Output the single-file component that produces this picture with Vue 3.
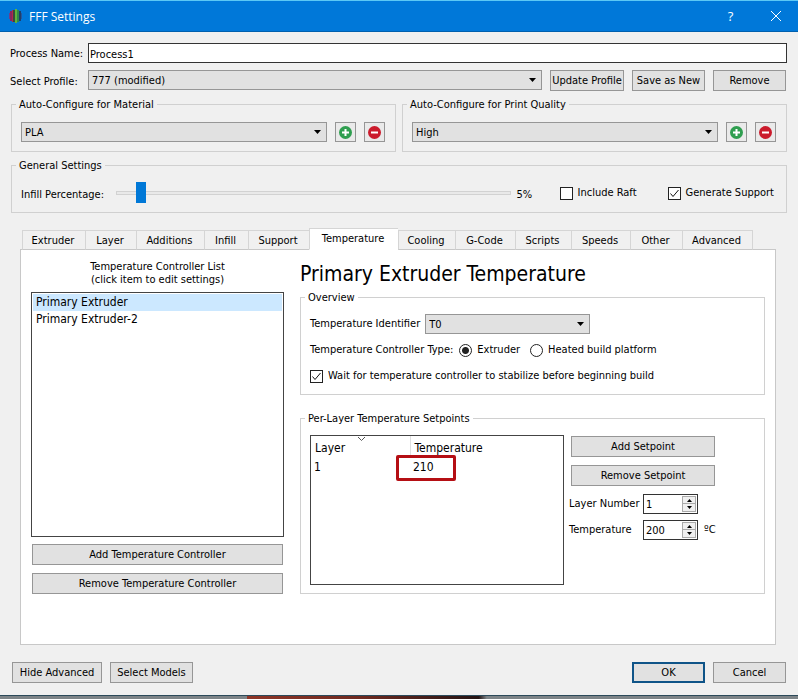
<script setup>
import { ref } from 'vue'

const processName = ref('Process1')
const profile = ref('777 (modified)')
const infill = ref(5)
const raft = ref(false)
const support = ref(true)
const presets = ref([
  { id: 'material', title: 'Auto-Configure for Material', value: 'PLA' },
  { id: 'quality', title: 'Auto-Configure for Print Quality', value: 'High' }
])
const tabs = [
  'Extruder', 'Layer', 'Additions', 'Infill', 'Support', 'Temperature',
  'Cooling', 'G-Code', 'Scripts', 'Speeds', 'Other', 'Advanced'
]
const activeTab = ref('Temperature')
const controllers = ['Primary Extruder', 'Primary Extruder-2']
const selected = ref('Primary Extruder')
const identifier = ref('T0')
const controllerType = ref('extruder')
const waitStable = ref(true)
const setpoints = ref([{ layer: 1, temperature: 210 }])
const spins = ref([
  { id: 'layer-number', label: 'Layer Number', value: 1, unit: '' },
  { id: 'set-temperature', label: 'Temperature', value: 200, unit: 'ºC' }
])
</script>

<template>
  <div class="window">
    <header class="titlebar">
      <svg class="logo" viewBox="0 0 14 14" aria-hidden="true">
        <path d="M0 4h1v6H0z" fill="#6b3f8c" />
        <path d="M1 2h2v10H1z" fill="#8a2560" />
        <path d="M3 1h1v12H3z" fill="#b02a4c" />
        <path d="M4 1h2v12H4z" fill="#3a4a3c" />
        <path d="M6 0h2v14H6z" fill="#5fb53c" />
        <path d="M8 1h2v12H8z" fill="#2f8a4a" />
        <path d="M10 2h2v10h-2z" fill="#1f3f6c" />
        <path d="M12 4h1v6h-1z" fill="#2358a0" />
      </svg>
      <h1 class="title">FFF Settings</h1>
      <button class="caption" type="button" aria-label="Help">?</button>
      <button class="caption" type="button" aria-label="Close">
        <svg class="close" viewBox="0 0 10 10" aria-hidden="true">
          <path d="M0 0L10 10M10 0L0 10" stroke="#fff" fill="none" />
        </svg>
      </button>
    </header>

    <main class="body">
      <div class="profile">
        <label for="process">Process Name:</label>
        <input id="process" v-model="processName" class="field" type="text" />
        <label for="profile">Select Profile:</label>
        <div class="profile-row">
          <span class="combo">
            <select id="profile" v-model="profile"><option>777 (modified)</option></select>
            <svg viewBox="0 0 7 4" aria-hidden="true"><path d="M0 0h7L3.500 4z" /></svg>
          </span>
          <button class="btn" type="button">Update Profile</button>
          <button class="btn" type="button">Save as New</button>
          <button class="btn" type="button">Remove</button>
        </div>
      </div>

      <div class="presets">
        <fieldset v-for="p in presets" :key="p.id" class="group">
          <legend>{{ p.title }}</legend>
          <div class="preset-row">
            <span class="combo">
              <select v-model="p.value" :aria-label="p.title"><option>{{ p.value }}</option></select>
              <svg viewBox="0 0 7 4" aria-hidden="true"><path d="M0 0h7L3.500 4z" /></svg>
            </span>
            <button class="btn icon" type="button" aria-label="Add">
              <svg viewBox="0 0 13 13" aria-hidden="true">
                <circle cx="6.500" cy="6.500" r="6.500" fill="#2f9e4f" />
                <path d="M6.500 3v7M3 6.500h7" stroke="#fff" stroke-width="2" />
              </svg>
            </button>
            <button class="btn icon" type="button" aria-label="Delete">
              <svg viewBox="0 0 13 13" aria-hidden="true">
                <circle cx="6.500" cy="6.500" r="6.500" fill="#cb1b2c" />
                <path d="M3 6.500h7" stroke="#fff" stroke-width="2" />
              </svg>
            </button>
          </div>
        </fieldset>
      </div>

      <fieldset class="group general">
        <legend>General Settings</legend>
        <div class="general-row">
          <label class="infill-label" for="infill">Infill Percentage:</label>
          <input id="infill" v-model="infill" class="slider" type="range" min="0" max="100" />
          <output class="percent" for="infill">{{ infill }}%</output>
          <label class="choice raft">
            <span class="box">
              <input v-model="raft" type="checkbox" />
              <svg viewBox="0 0 13 13" aria-hidden="true"><path d="M2.500 6.500L5 9.500L10.500 3" /></svg>
            </span>
            Include Raft
          </label>
          <label class="choice">
            <span class="box">
              <input v-model="support" type="checkbox" />
              <svg viewBox="0 0 13 13" aria-hidden="true"><path d="M2.500 6.500L5 9.500L10.500 3" /></svg>
            </span>
            Generate Support
          </label>
        </div>
      </fieldset>

      <div class="tabs" role="tablist">
        <button
          v-for="t in tabs" :key="t" type="button" role="tab" class="tab"
          :class="{ active: t === activeTab }" :aria-selected="t === activeTab"
          @click="activeTab = t"
        >{{ t }}</button>
      </div>

      <section class="pane">
        <div class="side">
          <p class="caption-text">Temperature Controller List<br />(click item to edit settings)</p>
          <ul class="list" role="listbox" aria-label="Temperature Controller List">
            <li
              v-for="c in controllers" :key="c" role="option"
              :class="{ chosen: c === selected }" :aria-selected="c === selected"
              @click="selected = c"
            >{{ c }}</li>
          </ul>
          <div class="side-actions">
            <button class="btn" type="button">Add Temperature Controller</button>
            <button class="btn" type="button">Remove Temperature Controller</button>
          </div>
        </div>

        <div class="detail">
          <h2 class="heading">{{ selected }} Temperature</h2>
          <fieldset class="group overview">
            <legend>Overview</legend>
            <div class="line">
              <label for="identifier">Temperature Identifier</label>
              <span class="combo ident">
                <select id="identifier" v-model="identifier"><option>T0</option></select>
                <svg viewBox="0 0 7 4" aria-hidden="true"><path d="M0 0h7L3.500 4z" /></svg>
              </span>
            </div>
            <div class="line types" role="radiogroup" aria-labelledby="type-label">
              <span id="type-label">Temperature Controller Type:</span>
              <label class="choice">
                <input v-model="controllerType" class="radio" type="radio" value="extruder" />Extruder
              </label>
              <label class="choice">
                <input v-model="controllerType" class="radio" type="radio" value="platform" />Heated build platform
              </label>
            </div>
            <label class="choice line">
              <span class="box">
                <input v-model="waitStable" type="checkbox" />
                <svg viewBox="0 0 13 13" aria-hidden="true"><path d="M2.500 6.500L5 9.500L10.500 3" /></svg>
              </span>
              Wait for temperature controller to stabilize before beginning build
            </label>
          </fieldset>

          <fieldset class="group setpoints">
            <legend>Per-Layer Temperature Setpoints</legend>
            <div class="setpoint-row">
              <div class="table-box">
                <table>
                  <thead>
                    <tr>
                      <th scope="col">
                        Layer
                        <svg class="sort" viewBox="0 0 7 4" aria-hidden="true">
                          <path d="M0 0L3.500 3.500L7 0" fill="none" stroke="#555" />
                        </svg>
                      </th>
                      <th scope="col">Temperature</th>
                    </tr>
                  </thead>
                  <tbody>
                    <tr v-for="s in setpoints" :key="s.layer">
                      <td>{{ s.layer }}</td>
                      <td><span class="mark">{{ s.temperature }}</span></td>
                    </tr>
                  </tbody>
                </table>
              </div>
              <div class="editor">
                <button class="btn" type="button">Add Setpoint</button>
                <button class="btn" type="button">Remove Setpoint</button>
                <div v-for="s in spins" :key="s.id" class="spin-row">
                  <label :for="s.id">{{ s.label }}</label>
                  <span class="spin">
                    <input :id="s.id" v-model="s.value" type="number" />
                    <span class="steps">
                      <button type="button" aria-label="Increase" @click="s.value++">
                        <svg viewBox="0 0 5 3" aria-hidden="true"><path d="M0 3h5L2.500 0z" /></svg>
                      </button>
                      <button type="button" aria-label="Decrease" @click="s.value--">
                        <svg viewBox="0 0 5 3" aria-hidden="true"><path d="M0 0h5L2.500 3z" /></svg>
                      </button>
                    </span>
                  </span>
                  <span>{{ s.unit }}</span>
                </div>
              </div>
            </div>
          </fieldset>
        </div>
      </section>

      <footer class="actions">
        <button class="btn hide" type="button">Hide Advanced</button>
        <button class="btn models" type="button">Select Models</button>
        <button class="btn primary" type="button">OK</button>
        <button class="btn" type="button">Cancel</button>
      </footer>
    </main>
    <div class="backdrop"></div>
  </div>
</template>

<style>
body {
  margin: 0;
  background: #f0f0f0;
}
</style>

<style scoped>
.window,
.window *,
.window *::after {
  box-sizing: border-box;
}
.window {
  display: flex;
  flex-direction: column;
  min-height: 100vh;
  background: #f0f0f0;
  color: #000;
  font: 11px/14px "DejaVu Sans Condensed", "Noto Sans", sans-serif;
}
button,
input,
select {
  margin: 0;
  font: inherit;
  color: inherit;
  border-radius: 0;
}
.titlebar {
  display: flex;
  align-items: center;
  height: 32px;
  padding-left: 9px;
  background: #0078d9;
  border-top: 1px solid #5cc8f5;
  border-bottom: 1px solid #0060ae;
  color: #fff;
}
.logo {
  width: 14px;
  height: 14px;
}
.title {
  flex: 1;
  margin: 0 0 0 6px;
  padding-top: 1px;
  font: 12px/16px "Open Sans", "Noto Sans", sans-serif;
}
.caption {
  display: grid;
  place-items: center;
  width: 45px;
  height: 30px;
  padding: 0;
  border: 0;
  background: none;
  font: 13px/16px "Open Sans", sans-serif;
}
.close {
  width: 10px;
  height: 10px;
}
.body {
  flex: 1;
  display: flex;
  flex-direction: column;
  padding: 11px 11px 12px;
}
.profile {
  display: grid;
  grid-template-columns: 78px 1fr;
  row-gap: 7px;
  align-items: center;
  margin-left: -1px;
}
.profile label {
  padding-top: 2px;
  white-space: nowrap;
}
.field {
  width: 100%;
  height: 20px;
  padding: 2px 1px 0;
  border: 1px solid #333;
  background: #fff;
}
.profile-row {
  display: grid;
  grid-template-columns: 1fr 74px 73px 73px;
  gap: 8px;
  padding-right: 1px;
}
.btn {
  height: 21px;
  padding: 0;
  border: 1px solid #969696;
  background: #e1e1e1;
  text-align: center;
  white-space: nowrap;
}
.combo {
  display: grid;
  align-items: center;
  height: 20px;
}
.combo select {
  grid-area: 1 / 1;
  width: 100%;
  height: 20px;
  padding: 2px 18px 0 3px;
  border: 1px solid #969696;
  background: #e1e1e1;
  appearance: none;
}
.combo svg {
  grid-area: 1 / 1;
  justify-self: end;
  width: 7px;
  height: 4px;
  margin-right: 6px;
  pointer-events: none;
}
.group {
  min-width: 0;
  margin: 0;
  padding: 0 9px;
  border: 1px solid #d0d0d0;
}
.group legend {
  height: 14px;
  margin-left: -5px;
  padding: 0 3px;
  line-height: 16px;
}
.presets {
  display: grid;
  grid-template-columns: 1fr 1fr;
  gap: 6px;
  margin-top: 6px;
}
.preset-row {
  display: grid;
  grid-template-columns: 1fr 21px 21px;
  gap: 8px;
  padding: 11px 1px 9px 0;
}
.icon {
  display: grid;
  place-items: center;
  height: 20px;
  background: #eaeaea;
}
.icon svg {
  width: 13px;
  height: 13px;
}
.general {
  margin-top: 6px;
}
.general-row {
  display: flex;
  align-items: center;
  height: 40px;
  padding: 2px 3px 0 0;
}
.infill-label,
.percent {
  padding-top: 3px;
}
.slider {
  flex: 1;
  min-width: 0;
  height: 21px;
  margin-left: 12px;
  background: none;
  appearance: none;
}
.slider::-webkit-slider-runnable-track {
  height: 4px;
  border: 1px solid #d2d2d2;
  background: #e9e9e9;
}
.slider::-webkit-slider-thumb {
  width: 10px;
  height: 21px;
  margin-top: -10px;
  background: #0078d7;
  appearance: none;
}
.percent {
  width: 49px;
  padding-left: 6px;
}
.choice {
  display: flex;
  align-items: center;
  gap: 5px;
  white-space: nowrap;
}
.raft {
  width: 108px;
}
.box {
  display: grid;
  width: 13px;
  height: 13px;
}
.box input {
  grid-area: 1 / 1;
  width: 13px;
  height: 13px;
  border: 1px solid #222;
  background: #fff;
  appearance: none;
}
.box svg {
  grid-area: 1 / 1;
  visibility: hidden;
  fill: none;
  stroke: #111;
  pointer-events: none;
}
.box input:checked + svg {
  visibility: visible;
}
.tabs {
  z-index: 1;
  display: grid;
  grid-template-columns: 63px 51px 68px 44px 61px 89px 57px 60px 56px 59px 52px 71px;
  align-items: end;
  margin: 15px 0 0 11px;
}
.tab {
  height: 20px;
  padding: 2px 2px 0 0;
  border: 1px solid #d5d5d5;
  border-right-width: 0;
  border-bottom-color: #c8c8c8;
  background: #f0f0f0;
}
.tab:last-child {
  border-right-width: 1px;
}
.tab.active {
  height: 22px;
  padding-bottom: 2px;
  border-bottom-color: #fff;
  background: #fff;
}
.pane {
  flex: 1;
  display: grid;
  grid-template-columns: 253px 1fr;
  gap: 16px;
  margin: -1px 11px 0 9px;
  padding: 10px;
  border: 1px solid #c8c8c8;
  background: #fff;
}
.side {
  display: flex;
  flex-direction: column;
}
.caption-text {
  margin: 0;
  line-height: 13px;
  text-align: center;
}
.list {
  height: 245px;
  margin: 6px 0 0;
  padding: 1px;
  border: 1px solid #444;
  list-style: none;
}
.list li {
  padding-left: 3px;
  font-size: 12px;
  line-height: 17px;
}
.list .chosen {
  background: #cce8ff;
}
.side-actions {
  display: grid;
  gap: 8px;
  padding: 7px 1px 0;
}
.heading {
  margin: 0;
  font-size: 21px;
  font-weight: 400;
  line-height: 28px;
  white-space: nowrap;
}
.overview {
  margin-top: 2px;
  padding-bottom: 8px;
}
.line {
  display: flex;
  align-items: center;
  height: 20px;
}
.ident {
  width: 165px;
  margin-left: 5px;
}
.overview .line {
  margin-top: 6px;
}
.overview legend + .line {
  margin-top: 10px;
}
.types .choice {
  margin-left: 6px;
}
.types .choice + .choice {
  margin-left: 10px;
}
.radio {
  width: 13px;
  height: 13px;
  border: 1px solid #222;
  border-radius: 50%;
  background: #fff;
  appearance: none;
}
.radio:checked {
  background: radial-gradient(circle, #222 3px, #fff 4px);
}
.setpoints {
  margin-top: 16px;
  padding-bottom: 8px;
}
.setpoint-row {
  display: flex;
  gap: 5px;
  padding-top: 10px;
}
.table-box {
  width: 254px;
  height: 150px;
  border: 1px solid #444;
}
table {
  width: 100%;
  border-collapse: collapse;
  table-layout: fixed;
}
th {
  position: relative;
  height: 22px;
  padding: 2px 4px 0;
  font-size: 12px;
  font-weight: 400;
  text-align: left;
}
th:first-child {
  width: 99px;
  border-right: 1px solid #e0e0e0;
}
.sort {
  position: absolute;
  top: 1px;
  left: 47px;
  width: 7px;
  height: 4px;
}
td {
  height: 18px;
  padding: 0 3px;
  font-size: 12px;
}
.mark {
  position: relative;
}
.mark::after {
  content: "";
  position: absolute;
  top: -5px;
  left: -17px;
  width: 60px;
  height: 26px;
  border: 3px solid #b50f14;
  border-radius: 2px;
}
.editor {
  display: flex;
  flex-direction: column;
  padding-top: 1px;
}
.editor .btn {
  width: 144px;
  margin: 0 0 8px 2px;
}
.spin-row {
  display: grid;
  grid-template-columns: 68px 55px auto;
  gap: 6px;
  align-items: center;
  height: 20px;
  margin-bottom: 6px;
  white-space: nowrap;
}
.spin {
  display: flex;
  height: 20px;
  padding: 1px;
  border: 1px solid #333;
  background: #fff;
}
.spin input {
  flex: 1;
  min-width: 0;
  padding: 1px 1px 0;
  border: 0;
  outline: 0;
  background: none;
  appearance: textfield;
}
.steps {
  display: grid;
  grid-template-rows: 1fr 1fr;
  width: 14px;
}
.steps button {
  display: grid;
  place-items: center;
  min-height: 0;
  padding: 0;
  border: 1px solid #aaa;
  background: #f0f0f0;
}
.steps button + button {
  border-top-width: 0;
}
.steps svg {
  width: 5px;
  height: 3px;
}
.actions {
  display: flex;
  gap: 8px;
  margin-top: 17px;
  padding: 0 1px;
}
.actions .btn {
  width: 73px;
}
.actions .hide {
  width: 90px;
}
.actions .models {
  width: 83px;
}
.actions .primary {
  margin-left: auto;
  border: 2px solid #0f5488;
}
.backdrop {
  height: 4px;
  border-top: 1px solid #2c4a5a;
  background: linear-gradient(90deg, #7d8488 31%, #8e3527 31%, #6f2a20 45%, #241414 60%, #7d8488 61%);
}
</style>
